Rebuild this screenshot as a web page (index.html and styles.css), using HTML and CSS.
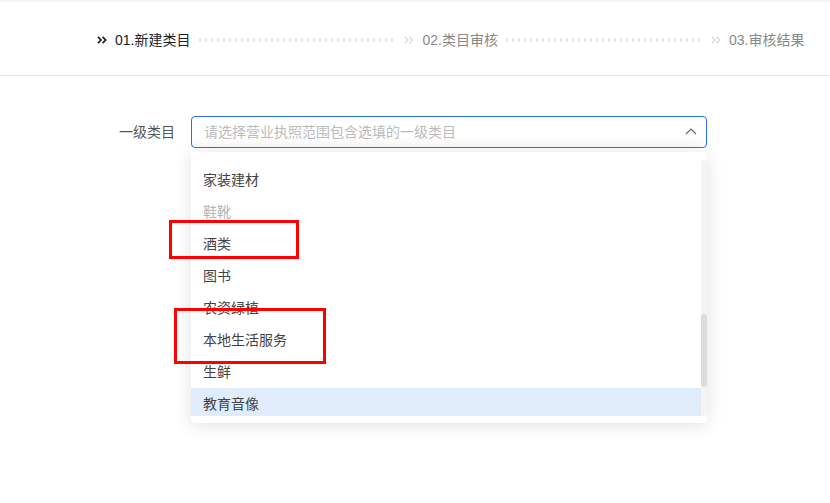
FILE: index.html
```html
<!DOCTYPE html>
<html lang="zh">
<head>
<meta charset="utf-8">
<link rel="stylesheet" href="styles.css">
</head>
<body>
<div class="topstrip"></div>
<header class="steps">
  <div class="step active">
    <svg class="arrows" width="10" height="8" viewBox="0 0 10 8"><path d="M1 0.8 L4 4 L1 7.2 M5.6 0.8 L8.6 4 L5.6 7.2" fill="none" stroke="currentColor" stroke-width="1.8"/></svg>
    <span class="step-text">01.新建类目</span>
  </div>
  <div class="dots d1"></div>
  <div class="step">
    <svg class="arrows" width="10" height="8" viewBox="0 0 10 8"><path d="M1 0.8 L4 4 L1 7.2 M5.6 0.8 L8.6 4 L5.6 7.2" fill="none" stroke="currentColor" stroke-width="1.4"/></svg>
    <span class="step-text">02.类目审核</span>
  </div>
  <div class="dots d2"></div>
  <div class="step">
    <svg class="arrows" width="10" height="8" viewBox="0 0 10 8"><path d="M1 0.8 L4 4 L1 7.2 M5.6 0.8 L8.6 4 L5.6 7.2" fill="none" stroke="currentColor" stroke-width="1.4"/></svg>
    <span class="step-text">03.审核结果</span>
  </div>
</header>
<main class="form">
  <div class="form-row">
    <label class="label">一级类目</label>
    <div class="select-wrap">
      <div class="select">
        <span class="placeholder">请选择营业执照范围包含选填的一级类目</span>
        <svg class="chev" width="12" height="7" viewBox="0 0 12 7"><path d="M1 6 L6 1 L11 6" fill="none" stroke="#666" stroke-width="1.1"/></svg>
      </div>
      <div class="dropdown">
        <div class="list">
          <div class="item">家装建材</div>
          <div class="item disabled">鞋靴</div>
          <div class="item">酒类</div>
          <div class="item">图书</div>
          <div class="item">农资绿植</div>
          <div class="item">本地生活服务</div>
          <div class="item">生鲜</div>
          <div class="item hover">教育音像</div>
        </div>
        <div class="scrollbar"><div class="thumb"></div></div>
      </div>
    </div>
  </div>
  <div class="mark m1"></div>
  <div class="mark m2"></div>
</main>
</body>
</html>
```

FILE: styles.css
```css
* { box-sizing: border-box; }
html, body { margin: 0; padding: 0; background: #fff; }
body {
  font-family: "Liberation Sans", "Noto Sans CJK SC", sans-serif;
  font-size: 14px;
  color: #333;
  width: 830px;
  height: 503px;
  overflow: hidden;
  position: relative;
}
.topstrip { height: 2px; background: #f2f3f6; }
.steps {
  height: 74px;
  border-bottom: 1px solid #e9e9e9;
  display: flex;
  align-items: center;
  padding-left: 97px;
  padding-top: 2px;
}
.step { display: flex; align-items: center; gap: 8px; color: #888; }
.step .arrows { color: #dcdcdc; display: block; }
.step.active { color: #222; }
.step.active .arrows { color: #222; }
.step-text { line-height: 20px; white-space: nowrap; }
.dots {
  height: 4px;
  background: repeating-linear-gradient(to right, #e6e6e6 0 2px, transparent 2px 6px);
}
.d1 { width: 194px; margin: 0 11px 0 9px; }
.d2 { width: 195px; margin: 0 10px 0 8px; }

.form { position: relative; height: 426px; }
.form-row {
  display: flex;
  align-items: flex-start;
  padding: 40px 0 0 119px;
}
.label {
  width: 56px;
  margin-right: 16px;
  line-height: 32px;
  color: #555;
  white-space: nowrap;
}
.select-wrap { position: relative; width: 516px; }
.select {
  height: 32px;
  border: 1px solid #2f6cf6;
  border-radius: 4px;
  display: flex;
  align-items: center;
  justify-content: space-between;
  padding: 0 9px 0 12px;
  background: linear-gradient(#fff 60%, #fafafa);
}
.placeholder { color: #bbb; line-height: 20px; }
.chev { display: block; margin-top: -1px; }

.dropdown {
  position: absolute;
  top: 36px;
  left: 0;
  width: 516px;
  height: 271px;
  background: #fff;
  border-radius: 4px;
  box-shadow: 0 2px 18px rgba(0, 0, 0, 0.12);
  display: flex;
  padding: 8px 0 7px;
}
.list {
  flex: 1;
  height: 256px;
  overflow: hidden;
  padding-top: 4px;
}
.item {
  height: 32px;
  line-height: 32px;
  padding-left: 12px;
  color: #444;
}
.item.disabled { color: #b4b4b4; }
.item.hover { background: #e1ecfb; }
.scrollbar {
  width: 6px;
  height: 256px;
  background: #f4f4f4;
  border-radius: 3px;
  padding-top: 154px;
}
.thumb {
  height: 73px;
  background: #dcdcdc;
  border-radius: 3px;
}

.mark {
  position: absolute;
  border: 3px solid #f00;
}
.m1 { left: 169px; top: 144px; width: 130px; height: 39px; }
.m2 { left: 174px; top: 232px; width: 152px; height: 56px; }
```
